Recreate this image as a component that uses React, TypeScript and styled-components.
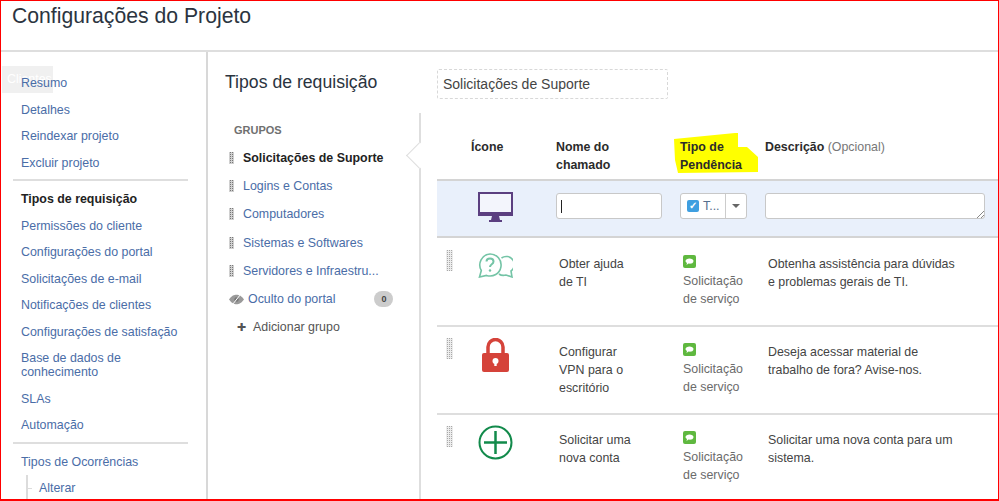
import styled, { createGlobalStyle } from 'styled-components';

const settingsTop = ['Resumo', 'Detalhes', 'Reindexar projeto', 'Excluir projeto'];
const settingsMid = [
  'Permissões do cliente',
  'Configurações do portal',
  'Solicitações de e-mail',
  'Notificações de clientes',
  'Configurações de satisfação',
];
const groups = ['Logins e Contas', 'Computadores', 'Sistemas e Softwares', 'Servidores e Infraestru...'];

function Monitor() {
  return (
    <svg width="35" height="30" viewBox="0 0 35 30">
      <path d="M1 1h33v22H1z" fill="#f3f5fc" stroke="#5b3f80" strokeWidth="2" />
      <path d="M0 20h35v4H0z" fill="#5b3f80" />
      <path d="M14 24h7l1 4h-9zM11 28h13v2H11z" fill="#5b3f80" />
    </svg>
  );
}

function HelpChat() {
  return (
    <svg width="35" height="25" viewBox="0 0 35 25" fill="none" stroke="#74c4a6" strokeWidth="1.6">
      <path d="M12 1a11 11 0 1 1-3.500 21.400L1.500 24l1.800-6.500A11 11 0 0 1 12 1z" />
      <path d="M23.500 5a7 7 0 0 1 9.500 13l1 6-6-2c-2 .5-5 .5-7-1" />
      <path d="M8.500 8.500c0-4 7-4 7 0 0 3-3.500 2.500-3.500 5.500" strokeWidth="2" />
      <circle cx="12" cy="17.500" r="1.200" fill="#74c4a6" stroke="none" />
    </svg>
  );
}

function Padlock() {
  return (
    <svg width="27" height="34" viewBox="0 0 27 34">
      <path d="M6 16V9a7.500 7.500 0 0 1 15 0v7" fill="none" stroke="#d5433a" strokeWidth="3.500" />
      <rect x="0" y="15" width="27" height="19" rx="2" fill="#d5433a" />
      <circle cx="13.500" cy="23" r="3" fill="#fff" />
      <path d="M12.300 24h2.400v4h-2.400z" fill="#fff" />
    </svg>
  );
}

function PlusCircle() {
  return (
    <svg width="35" height="35" viewBox="0 0 35 35" fill="none" stroke="#128a4b">
      <circle cx="17.500" cy="17.500" r="16" strokeWidth="2" />
      <path d="M17.500 6v23M6 17.500h23" strokeWidth="2.500" />
    </svg>
  );
}

function HiddenEye() {
  return (
    <svg width="15" height="11" viewBox="0 0 15 11">
      <path d="M0 5.500C3 1.500 5 .8 7.500.8s4.500.7 7.500 4.700c-3 4-5 4.700-7.500 4.700S3 9.500 0 5.500z" fill="#9a9a9a" />
      <circle cx="7.500" cy="5.500" r="2.200" fill="#777" />
      <path d="M3.500 10.500l8-10" stroke="#fff" strokeWidth="1" />
    </svg>
  );
}

function ServiceBadge() {
  return (
    <svg width="13" height="13" viewBox="0 0 13 13">
      <rect width="13" height="13" rx="2" fill="#5fb83f" />
      <path d="M2.500 6c0-3.500 8-3.500 8 0 0 2.800-3.500 3-5 2.600L3.500 10 4 7.900C3 7.400 2.500 6.800 2.500 6z" fill="#fff" />
    </svg>
  );
}

const requestTypes = [
  {
    name: ['Obter ajuda', 'de TI'],
    desc: ['Obtenha assistência para dúvidas', 'e problemas gerais de TI.'],
    icon: <HelpChat />,
    left: 7,
    top: 0,
  },
  {
    name: ['Configurar', 'VPN para o', 'escritório'],
    desc: ['Deseja acessar material de', 'trabalho de fora? Avise-nos.'],
    icon: <Padlock />,
    left: 11,
    top: -3,
  },
  {
    name: ['Solicitar uma', 'nova conta'],
    desc: ['Solicitar uma nova conta para um', 'sistema.'],
    icon: <PlusCircle />,
    left: 7,
    top: -4,
  },
];

export default function App() {
  return (
    <>
      <GlobalStyle />
      <Page>
        <Header>
          <Title>Configurações do Projeto</Title>
        </Header>
        <Body>
          <Sidebar>
            <GhostTip>Clientes</GhostTip>
            {settingsTop.map((s) => (
              <NavLink key={s}>{s}</NavLink>
            ))}
            <NavRule />
            <NavLink $active>Tipos de requisição</NavLink>
            {settingsMid.map((s) => (
              <NavLink key={s}>{s}</NavLink>
            ))}
            <NavLink>
              Base de dados de
              <br />
              conhecimento
            </NavLink>
            <NavLink>SLAs</NavLink>
            <NavLink>Automação</NavLink>
            <NavRule />
            <NavLink>Tipos de Ocorrências</NavLink>
            <SubLink>Alterar</SubLink>
          </Sidebar>
          <Content>
            <TopRow>
              <Heading>Tipos de requisição</Heading>
              <NameField>Solicitações de Suporte</NameField>
            </TopRow>
            <Columns>
              <GroupList>
                <GroupsLabel>GRUPOS</GroupsLabel>
                <GroupRow $current>
                  <GroupGrip />
                  Solicitações de Suporte
                </GroupRow>
                {groups.map((g) => (
                  <GroupRow key={g}>
                    <GroupGrip />
                    {g}
                  </GroupRow>
                ))}
                <HiddenRow>
                  <HiddenEye />
                  <span>Oculto do portal</span>
                  <CountPill>0</CountPill>
                </HiddenRow>
                <AddRow>
                  <PlusMark>✚</PlusMark>
                  Adicionar grupo
                </AddRow>
              </GroupList>
              <TablePanel>
                <Notch />
                <HeadRow>
                  <span />
                  <HeadCell>Ícone</HeadCell>
                  <HeadCell>
                    Nome do
                    <br />
                    chamado
                  </HeadCell>
                  <TypeHead>
                    <Marker viewBox="0 0 85 41" width="85" height="41">
                      <path d="M0 6L61 0H64V14H73L84 24V39L4 40L1 27z" fill="#ffff00" />
                    </Marker>
                    <HeadText>
                      Tipo de
                      <br />
                      Pendência
                    </HeadText>
                  </TypeHead>
                  <HeadCell>
                    Descrição <Optional>(Opcional)</Optional>
                  </HeadCell>
                </HeadRow>
                <NewRow>
                  <span />
                  <MonitorCell>
                    <Monitor />
                  </MonitorCell>
                  <TextBox>
                    <Caret />
                  </TextBox>
                  <TypeSelect>
                    <SelectValue>
                      <CheckTile>✓</CheckTile>
                      T...
                    </SelectValue>
                    <SelectArrow />
                  </TypeSelect>
                  <TextArea>
                    <Resizer width="8" height="8" viewBox="0 0 8 8">
                      <path d="M1 8l7-7M5 8l3-3" stroke="#888" strokeWidth="1" />
                    </Resizer>
                  </TextArea>
                </NewRow>
                {requestTypes.map((r) => (
                  <TypeRow key={r.name[0]}>
                    <RowGrip />
                    <IconCell $left={r.left} $top={r.top}>
                      {r.icon}
                    </IconCell>
                    <NameCell>
                      {r.name.map((n) => (
                        <div key={n}>{n}</div>
                      ))}
                    </NameCell>
                    <KindCell>
                      <ServiceBadge />
                      <KindText>
                        Solicitação
                        <br />
                        de serviço
                      </KindText>
                    </KindCell>
                    <DescCell>
                      {r.desc.map((n) => (
                        <div key={n}>{n}</div>
                      ))}
                    </DescCell>
                  </TypeRow>
                ))}
              </TablePanel>
            </Columns>
          </Content>
        </Body>
      </Page>
    </>
  );
}

const GlobalStyle = createGlobalStyle`
  html, body {
    margin: 0;
    padding: 0;
    background: #fff;
  }
  * {
    box-sizing: border-box;
  }
`;

const Page = styled.div`
  width: 999px;
  height: 501px;
  display: flex;
  flex-direction: column;
  overflow: hidden;
  border: 1px solid #f00;
  border-bottom-width: 2px;
  font-family: 'Liberation Sans', Arial, sans-serif;
  font-size: 12.4px;
  color: #333;
`;

const Header = styled.header`
  height: 51px;
  flex: none;
  padding: 3px 0 0 11px;
  border-bottom: 2px solid #dedede;
`;

const Title = styled.h1`
  margin: 0;
  font-size: 21.2px;
  line-height: 24px;
  font-weight: 400;
  color: #2b3440;
`;

const Body = styled.div`
  flex: 1;
  display: flex;
  min-height: 0;
`;

const Sidebar = styled.nav`
  position: relative;
  width: 207px;
  flex: none;
  padding: 24px 18px 0 12px;
  border-right: 2px solid #d8d8d8;
`;

const GhostTip = styled.div`
  position: absolute;
  left: 1px;
  top: 14px;
  width: 51px;
  height: 27px;
  padding: 6px 0 0 5px;
  background: #f0f0f0;
  color: #fff;
`;

const NavLink = styled.div<{ $active?: boolean }>`
  position: relative;
  padding: 0 0 0 8px;
  margin-bottom: 12.5px;
  line-height: 14px;
  color: ${(p) => (p.$active ? '#222' : '#4a6da7')};
  font-weight: ${(p) => (p.$active ? 700 : 400)};
`;

const SubLink = styled(NavLink)`
  margin-left: 13px;
  padding-left: 13px;
  &::before {
    content: '';
    position: absolute;
    left: 0;
    top: -6px;
    height: 40px;
    border-left: 2px solid #dcdcdc;
  }
  &::after {
    content: '';
    position: absolute;
    left: 2px;
    top: 7px;
    width: 4px;
    border-top: 1px solid #dcdcdc;
  }
`;

const NavRule = styled.div`
  height: 2px;
  margin: -3px 0 11px;
  background: #dedede;
`;

const Content = styled.main`
  flex: 1;
  min-width: 0;
  display: flex;
  flex-direction: column;
`;

const TopRow = styled.div`
  height: 61px;
  flex: none;
  display: flex;
  align-items: flex-start;
  padding: 17px 0 0 17px;
`;

const Heading = styled.h2`
  width: 212px;
  margin: 1px 0 0;
  font-size: 17.65px;
  line-height: 24px;
  font-weight: 400;
  color: #2b3440;
`;

const NameField = styled.div`
  width: 231px;
  height: 30px;
  padding-left: 5px;
  line-height: 28px;
  font-size: 14px;
  color: #444;
  border: 1px dashed #d8d8d8;
  border-radius: 2px;
`;

const Columns = styled.div`
  flex: 1;
  display: flex;
  min-height: 0;
`;

const GroupList = styled.div`
  width: 211px;
  flex: none;
  padding: 10px 0 0 21px;
`;

const GroupsLabel = styled.div`
  height: 21px;
  padding-left: 5px;
  font-size: 11px;
  font-weight: 700;
  color: #707070;
  line-height: 14px;
`;

const GroupRow = styled.div<{ $current?: boolean }>`
  display: flex;
  align-items: center;
  gap: 9px;
  height: 28.2px;
  color: ${(p) => (p.$current ? '#222' : '#4a6da7')};
  font-weight: ${(p) => (p.$current ? 700 : 400)};
`;

const GroupGrip = styled.i`
  width: 5px;
  height: 12px;
  flex: none;
  background-color: #d0d0d0;
  background-image: conic-gradient(#777 25%, transparent 0);
  background-size: 2px 2px;
`;

const HiddenRow = styled.div`
  display: flex;
  align-items: center;
  gap: 4px;
  height: 28.2px;
  color: #4a6da7;
`;

const CountPill = styled.b`
  width: 19px;
  height: 16px;
  margin-left: 35px;
  border-radius: 8px;
  background: #ccc;
  color: #444;
  font-size: 9px;
  line-height: 16px;
  text-align: center;
`;

const AddRow = styled.div`
  display: flex;
  align-items: center;
  gap: 7px;
  height: 28px;
  margin-left: 8px;
  color: #555;
`;

const PlusMark = styled.span`
  font-size: 11px;
  color: #555;
`;

const TablePanel = styled.section`
  position: relative;
  flex: 1;
  min-width: 0;
  padding-left: 16px;
  border-left: 2px solid #dedede;
`;

const Notch = styled.div`
  position: absolute;
  left: -11.5px;
  top: 32.5px;
  width: 19px;
  height: 19px;
  background: #fff;
  border-left: 1px solid #dedede;
  border-bottom: 1px solid #dedede;
  transform: rotate(45deg);
`;

const rowGrid = `
  display: grid;
  grid-template-columns: 34px 85px 124px 85px 1fr;
`;

const HeadRow = styled.div`
  ${rowGrid}
  position: relative;
  height: 66px;
  padding-top: 25px;
`;

const HeadCell = styled.div`
  font-weight: 700;
  line-height: 18px;
  color: #2b2b2b;
`;

const TypeHead = styled(HeadCell)`
  position: relative;
`;

const Marker = styled.svg`
  position: absolute;
  left: -6px;
  top: -5px;
`;

const HeadText = styled.span`
  position: relative;
`;

const Optional = styled.span`
  font-weight: 400;
  color: #777;
`;

const NewRow = styled.div`
  ${rowGrid}
  position: relative;
  height: 59px;
  margin-bottom: 1px;
  padding-top: 12px;
  background: #e9f0fb;
  border-top: 2px solid #d4d4d4;
  border-bottom: 2px solid #d4d4d4;
`;

const MonitorCell = styled.div`
  padding-left: 7px;
  margin-top: -1px;
`;

const IconCell = styled.div<{ $left: number; $top: number }>`
  padding-left: ${(p) => p.$left}px;
  margin-top: ${(p) => p.$top}px;
`;

const fieldBox = `
  height: 26px;
  background: #fff;
  border: 1px solid #c8c8c8;
  border-radius: 3px;
`;

const TextBox = styled.div`
  ${fieldBox}
  width: 106px;
  position: relative;
`;

const Caret = styled.div`
  position: absolute;
  left: 4px;
  top: 6px;
  width: 1px;
  height: 13px;
  background: #222;
`;

const TypeSelect = styled.div`
  ${fieldBox}
  width: 67px;
  display: flex;
`;

const SelectValue = styled.div`
  flex: 1;
  display: flex;
  align-items: center;
  gap: 4px;
  padding-left: 6px;
  color: #56708f;
  border-right: 1px solid #ccc;
`;

const CheckTile = styled.span`
  width: 12px;
  height: 12px;
  border-radius: 2px;
  background: #3f9fe0;
  color: #fff;
  font-size: 10px;
  font-weight: 700;
  line-height: 12px;
  text-align: center;
`;

const SelectArrow = styled.div`
  width: 20px;
  position: relative;
  &::after {
    content: '';
    position: absolute;
    left: 6px;
    top: 10px;
    border: 4px solid transparent;
    border-top-color: #666;
  }
`;

const TextArea = styled.div`
  ${fieldBox}
  width: 220px;
  position: relative;
`;

const Resizer = styled.svg`
  position: absolute;
  right: 0;
  bottom: 0;
`;

const TypeRow = styled.div`
  ${rowGrid}
  height: 88px;
  padding-top: 14px;
  border-bottom: 2px solid #dedede;
  line-height: 18px;
  color: #444;
`;

const RowGrip = styled.i`
  width: 7px;
  height: 21px;
  margin: -3px 0 0 9px;
  background-color: #ececec;
  background-image: conic-gradient(#a8a8a8 25%, transparent 0);
  background-size: 2px 2px;
`;

const NameCell = styled.div`
  padding: 2px 0 0 3px;
`;

const KindCell = styled.div`
  padding-top: 2px;
  svg {
    display: block;
    margin: 0 0 4px 3px;
  }
`;

const KindText = styled.div`
  padding-left: 3px;
  color: #6b6b6b;
`;

const DescCell = styled.div`
  padding: 2px 0 0 3px;
`;
